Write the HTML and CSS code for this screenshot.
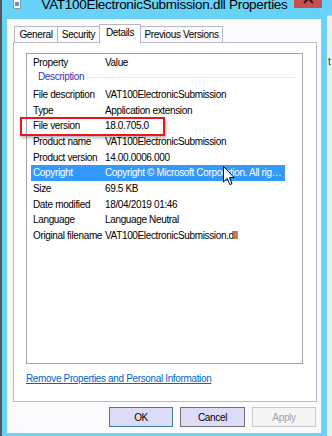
FILE: index.html
```html
<!DOCTYPE html>
<html lang="en">
<head>
    <meta charset="UTF-8">
    <meta name="viewport" content="width=device-width, initial-scale=1.0">
    <title>VAT100ElectronicSubmission.dll Properties</title>
    <link rel="stylesheet" href="styles.css">
</head>
<body>

<div class="desk">
    <div class="edge-left"></div>

    <div class="window">
        <div class="titlebar">
            <span class="app-icon">
                <svg width="8" height="9" viewBox="0 0 8 9">
                    <path d="M0.5 -2 H5.5 L7.5 0 V8.5 H0.5 Z" fill="#fff" stroke="#8a96a6"/>
                    <rect x="2" y="2" width="4" height="4" fill="#6a8ec8"/>
                </svg>
            </span>
            <span class="title">VAT100ElectronicSubmission.dll Properties</span>
            <span class="close">
                <svg width="28" height="8" viewBox="0 0 28 8">
                    <path d="M10 -6 L19 3 M19 -6 L10 3" stroke="#1c1c1c" stroke-width="2"/>
                </svg>
            </span>
        </div>

        <div class="client">
            <div class="tabs">
                <div class="tab tab-general">General</div>
                <div class="tab tab-security">Security</div>
                <div class="tab tab-details active">Details</div>
                <div class="tab tab-previous">Previous Versions</div>
            </div>

            <div class="panel">
                <div class="list">
                    <div class="row head">
                        <span class="col-prop">Property</span>
                        <span class="col-val">Value</span>
                    </div>
                    <div class="group">
                        <span class="group-name">Description</span>
                        <span class="group-line"></span>
                    </div>
                    <div class="rows">
                        <div class="row"><span class="col-prop">File description</span><span class="col-val">VAT100ElectronicSubmission</span></div>
                        <div class="row"><span class="col-prop">Type</span><span class="col-val">Application extension</span></div>
                        <div class="row"><span class="col-prop">File version</span><span class="col-val">18.0.705.0</span></div>
                        <div class="row"><span class="col-prop">Product name</span><span class="col-val">VAT100ElectronicSubmission</span></div>
                        <div class="row"><span class="col-prop">Product version</span><span class="col-val">14.00.0006.000</span></div>
                        <div class="row selected"><span class="col-prop">Copyright</span><span class="col-val">Copyright © Microsoft Corporation. All rights reserved.</span></div>
                        <div class="row"><span class="col-prop">Size</span><span class="col-val">69.5 KB</span></div>
                        <div class="row"><span class="col-prop">Date modified</span><span class="col-val">18/04/2019 01:46</span></div>
                        <div class="row"><span class="col-prop">Language</span><span class="col-val">Language Neutral</span></div>
                        <div class="row"><span class="col-prop">Original filename</span><span class="col-val">VAT100ElectronicSubmission.dll</span></div>
                    </div>
                </div>
                <a class="remove-link" href="#">Remove Properties and Personal Information</a>
            </div>

            <div class="buttons">
                <button class="btn btn-ok">OK</button>
                <button class="btn btn-cancel">Cancel</button>
                <button class="btn btn-apply" disabled>Apply</button>
            </div>
        </div>
    </div>

    <div class="edge-right">
        <div class="edge-right-top"></div>
        <div class="edge-right-text">t</div>
    </div>

    <div class="highlight"></div>
    <svg class="cursor" width="12" height="20" viewBox="0 0 12 20">
        <path d="M0.5 0.5 V16 L4.2 12.4 L6.8 18.6 L9 17.6 L6.5 11.6 H11.2 Z" fill="#fff" stroke="#000" stroke-width="1"/>
    </svg>
</div>

</body>
</html>
```

FILE: styles.css
```css
body {
    margin: 0;
    font-family: "Liberation Sans", Arial, sans-serif;
    font-size: 10px;
    letter-spacing: -0.35px;
    color: #000;
}
.desk {
    position: relative;
    display: flex;
    width: 332px;
    height: 436px;
    overflow: hidden;
}
.edge-left {
    width: 2px;
    background: #535a55;
}
.edge-right {
    flex: 1;
    display: flex;
    flex-direction: column;
    background: #eeeeee;
    overflow: hidden;
}
.edge-right-top {
    height: 15px;
    background: #69d2f8;
    border-bottom: 1px solid #cfcfcf;
}
.edge-right-text {
    margin-top: 40px;
    padding-left: 1px;
    color: #333;
    line-height: 12px;
}
.window {
    width: 325px;
    display: flex;
    flex-direction: column;
    background: #69d2f8;
    padding: 0 6px 3px 5px;
    box-sizing: border-box;
}

/* title bar */
.titlebar {
    height: 19px;
    margin: 0 -6px 0 -5px;
    display: grid;
    grid-template-columns: 1fr auto 1fr;
    align-items: start;
    overflow: hidden;
}
.app-icon {
    margin-left: 11px;
    height: 9px;
}
.app-icon svg {
    display: block;
}
.title {
    font-size: 13.5px;
    letter-spacing: -0.3px;
    line-height: 18px;
    margin-top: -4px;
    white-space: nowrap;
}
.close {
    justify-self: end;
    margin-right: 5px;
    width: 28px;
    height: 8px;
    background: #c9504f;
}
.close svg {
    display: block;
}

/* client area */
.client {
    flex: 1;
    display: flex;
    flex-direction: column;
    background: #fbfbfd;
}
.tabs {
    display: flex;
    align-items: flex-end;
    height: 18px;
    margin-top: 5px;
    padding-left: 7px;
}
.tab {
    height: 16px;
    box-sizing: border-box;
    border: 1px solid #b9b9c4;
    border-bottom: none;
    margin-left: -1px;
    background: #fbfbfd;
    text-align: center;
    line-height: 16px;
    white-space: nowrap;
}
.tab:first-child {
    margin-left: 0;
}
.tab-general { width: 44px; }
.tab-security { width: 43px; }
.tab-details { width: 42px; }
.tab-previous { width: 83px; }
.tab.active {
    position: relative;
    z-index: 1;
    height: 19px;
    margin-bottom: -1px;
    background: #fff;
    line-height: 16px;
}

.panel {
    width: 304px;
    height: 360px;
    margin-left: 6px;
    box-sizing: border-box;
    border: 1px solid #bdbdc9;
    background: #fff;
    padding: 10px 0 0 12px;
}
.list {
    width: 277px;
    height: 311px;
    box-sizing: border-box;
    border: 1px solid #a3a3ae;
    padding: 1px 0 0 4px;
}
.row {
    display: flex;
    width: 254px;
    height: 15.67px;
    line-height: 15.67px;
    white-space: nowrap;
}
.row.head {
    height: 15px;
    line-height: 15px;
}
.col-prop {
    width: 73.5px;
    padding-left: 2px;
    flex-shrink: 0;
    box-sizing: border-box;
}
.col-val {
    flex: 1;
    overflow: hidden;
    text-overflow: ellipsis;
    padding-left: 0.5px;
    padding-right: 2px;
}
.row.selected {
    background: #3399ff;
    color: #fff;
}
.group {
    display: flex;
    align-items: center;
    height: 14.5px;
    line-height: 14.5px;
    padding-left: 7px;
    width: 257px;
}
.group-name {
    color: #3035b0;
}
.group-line {
    flex: 1;
    height: 1px;
    margin-left: 2px;
    background: #dcecf6;
}
.rows {
    margin-top: 2.67px;
}

.remove-link {
    display: inline-block;
    margin-top: 8px;
    line-height: 13px;
    color: #0066cc;
    text-decoration: underline;
}

.buttons {
    display: flex;
    justify-content: flex-end;
    gap: 7px;
    margin-top: 5px;
    padding-right: 5px;
}
.btn {
    height: 20px;
    box-sizing: border-box;
    padding: 0;
    font-family: inherit;
    font-size: 10px;
    letter-spacing: inherit;
    color: #000;
    background: #dcdcf6;
    border: 1px solid #707070;
}
.btn-ok {
    width: 64px;
    border-color: #3d7bad;
}
.btn-cancel {
    width: 65px;
}
.btn-apply {
    width: 64px;
    background: #f5f5f5;
    border-color: #c9c9c9;
    color: #a3a3a3;
}

/* annotation and pointer over the dialog */
.highlight {
    position: absolute;
    left: 20px;
    top: 117px;
    width: 145px;
    height: 19px;
    box-sizing: border-box;
    border: 2px solid #e8171c;
    box-shadow: 1px 2px 3px rgba(0, 0, 0, 0.3);
}
.cursor {
    position: absolute;
    left: 223px;
    top: 166px;
}
```
